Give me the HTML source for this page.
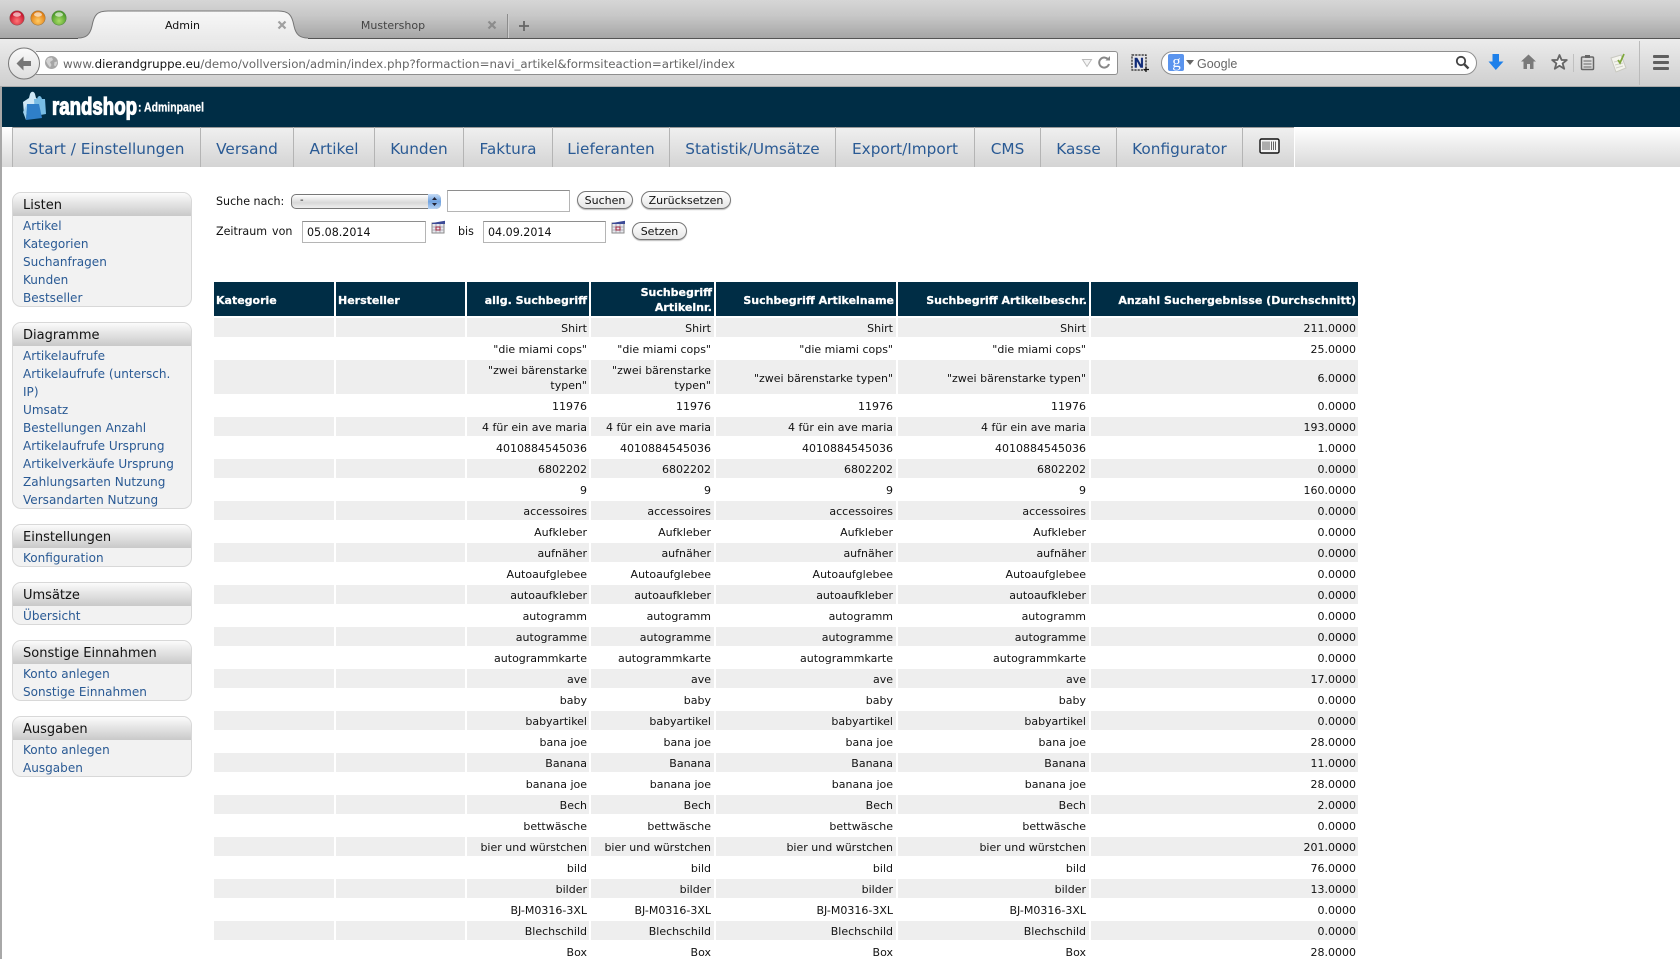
<!DOCTYPE html>
<html lang="de"><head><meta charset="utf-8"><title>Admin</title>
<style>
html,body{margin:0;padding:0;width:1680px;height:959px;overflow:hidden;background:#fff}
body{position:relative;font-family:"DejaVu Sans","Liberation Sans",sans-serif;color:#111}
.a{position:absolute;white-space:nowrap}
#title{left:0;top:0;width:1680px;height:38px;background:linear-gradient(#d6d6d6,#c8c8c8 40%,#a6a6a6);border-bottom:1px solid #555}
#tool{left:0;top:39px;width:1680px;height:47px;background:linear-gradient(#ececec,#cfcfcf);border-bottom:1px solid #aaa}
#edge{left:0;top:87px;width:2px;height:872px;background:#a8a8a8}
#dark{left:0;top:87px;width:1680px;height:40px;background:#002d45}
#nav{left:0;top:127px;width:1680px;height:40px;background:linear-gradient(#fff,#d9d9d9)}
.n{position:absolute;top:127px;height:40px;line-height:44px;font-size:15.3px;color:#2a5a94;text-align:center;border-right:1px solid #b4b4b4;background:linear-gradient(#f0f0f0,#d4d4d4);box-shadow:inset 0 1px 0 #999}
.box{position:absolute;left:12px;width:178px;border:1px solid #d8d8d8;border-radius:9px;background:#f2f2f2;overflow:hidden}
.box h4{margin:0;height:23px;line-height:25px;padding-left:10px;font-weight:normal;font-size:13px;color:#111;background:linear-gradient(#fbfbfb,#c9c9c9)}
.box a{display:block;position:relative;top:1px;margin-left:10px;font-size:12.05px;line-height:18px;color:#2a5a94}
.lb{font-size:11.1px;color:#111;line-height:16px}
.in{position:absolute;box-sizing:border-box;border:1px solid #b5b5b5;border-top-color:#8e8e8e;background:#fff;font-size:11.1px;line-height:22px;padding-left:4px;color:#111}
.bt{position:absolute;box-sizing:border-box;height:18px;border:1px solid #777;border-radius:9px;background:linear-gradient(#fff,#e6e6e6);font-size:11px;line-height:17px;text-align:center;color:#111;box-shadow:0 1px 1px #bbb}
table{position:absolute;left:212px;top:280px;border-collapse:separate;border-spacing:2px;table-layout:fixed;width:1148px}
th{background:#002d45;color:#fff;font-size:11px;font-weight:bold;text-align:right;padding:3px 2px 1px;height:30px;line-height:15px;-webkit-text-stroke:.25px #fff}
th.l{text-align:left}
td{font-size:11px;line-height:15px;height:15px;padding:3px 2px 1px 2px;text-align:right;color:#111}
td:nth-child(4),td:nth-child(5),td:nth-child(6){padding-right:3px}
tr.g td{background:#eee}
</style></head><body>

<div class="a" id="title"></div>
<div class="a" id="tool"></div>

<!-- traffic lights -->
<svg class="a" style="left:0;top:0" width="80" height="36">
<defs>
<radialGradient id="r" cx="50%" cy="70%" r="60%"><stop offset="0" stop-color="#f77"/><stop offset="1" stop-color="#c8102a"/></radialGradient>
<radialGradient id="y" cx="50%" cy="70%" r="60%"><stop offset="0" stop-color="#fc6"/><stop offset="1" stop-color="#e07b10"/></radialGradient>
<radialGradient id="v" cx="50%" cy="70%" r="60%"><stop offset="0" stop-color="#ad6"/><stop offset="1" stop-color="#4a9a28"/></radialGradient>
</defs>
<circle cx="17" cy="18" r="7.2" fill="url(#r)" stroke="#8a5a5a" stroke-width=".6"/>
<circle cx="38" cy="18" r="7.2" fill="url(#y)" stroke="#9a7a4a" stroke-width=".6"/>
<circle cx="59" cy="18" r="7.2" fill="url(#v)" stroke="#5a8a4a" stroke-width=".6"/>
<ellipse cx="17" cy="14.5" rx="4" ry="2.2" fill="#fff" opacity=".6"/>
<ellipse cx="38" cy="14.5" rx="4" ry="2.2" fill="#fff" opacity=".6"/>
<ellipse cx="59" cy="14.5" rx="4" ry="2.2" fill="#fff" opacity=".6"/>
</svg>

<!-- active tab -->
<svg class="a" style="left:72px;top:8px" width="244" height="32">
<defs><linearGradient id="tb" x1="0" y1="0" x2="0" y2="1"><stop offset="0" stop-color="#f8f8f8"/><stop offset="1" stop-color="#e9e9e9"/></linearGradient></defs>
<path d="M6 30C14 30 18 27 20 18C22 7 25 3 36 3H206C217 3 220 7 222 18C224 27 228 30 236 30V32H6Z" fill="url(#tb)"/>
<path d="M6 30C14 30 18 27 20 18C22 7 25 3 36 3H206C217 3 220 7 222 18C224 27 228 30 236 30" fill="none" stroke="#777" stroke-width="1"/>
</svg>
<div class="a" style="left:150px;top:18px;width:65px;text-align:center;font-size:11px;line-height:16px;color:#111">Admin</div>
<svg class="a" style="left:277px;top:20px" width="10" height="10"><path d="M1.5 1.5L8.5 8.5M8.5 1.5L1.5 8.5" stroke="#a0a0a0" stroke-width="2.2"/></svg>
<div class="a" style="left:350px;top:18px;width:86px;text-align:center;font-size:11px;line-height:16px;color:#444">Mustershop</div>
<svg class="a" style="left:487px;top:20px" width="10" height="10"><path d="M1.5 1.5L8.5 8.5M8.5 1.5L1.5 8.5" stroke="#8c8c8c" stroke-width="2.2"/></svg>
<div class="a" style="left:507px;top:14px;width:1px;height:24px;background:#8c8c8c;box-shadow:1px 0 0 #ccc"></div>
<svg class="a" style="left:518px;top:20px" width="12" height="12"><path d="M6 1V11M1 6H11" stroke="#666" stroke-width="1.8"/></svg>

<!-- url bar -->
<div class="a" style="left:36px;top:51px;width:1081px;height:22px;background:#fff;border:1px solid #8f8f8f;border-left:none;border-radius:0 3px 3px 0"></div>
<svg class="a" style="left:6px;top:46px" width="36" height="36">
<defs><linearGradient id="bk" x1="0" y1="0" x2="0" y2="1"><stop offset="0" stop-color="#fafafa"/><stop offset="1" stop-color="#dedede"/></linearGradient></defs>
<circle cx="18" cy="17.5" r="15.5" fill="url(#bk)" stroke="#777"/>
<path d="M10.5 17.5L17.5 10.5V15H25V20H17.5V24.5Z" fill="#777"/>
</svg>
<svg class="a" style="left:44px;top:55px" width="15" height="15"><circle cx="7.5" cy="7.5" r="6.5" fill="#a6a6a6"/><path d="M4 3L8 2.5L9 5L6 7L7.5 10L6 12.5L3.5 9L2 6ZM10.5 7L13.5 6.5L12 11L10 10.5Z" fill="#d2d2d2"/></svg>
<div class="a" style="left:63px;top:56px;width:680px;font-family:'DejaVu Sans',sans-serif;font-size:11.82px;line-height:17px;color:#666"><span style="color:#666">www.</span><span style="color:#111">dierandgruppe.eu</span>/demo/vollversion/admin/index.php?formaction=navi_artikel&amp;formsiteaction=artikel/index</div>
<svg class="a" style="left:1081px;top:58px" width="12" height="10"><path d="M1.5 1.5H10.5L6 8.5Z" fill="#f4f4f4" stroke="#bbb"/></svg>
<svg class="a" style="left:1097px;top:55px" width="15" height="15"><path d="M11.5 5A5 5 0 1 0 12 9" fill="none" stroke="#888" stroke-width="2"/><path d="M8.5 5.5H13V1Z" fill="#888"/></svg>

<!-- N icon -->
<svg class="a" style="left:1131px;top:54px" width="19" height="19">
<rect x="1" y="1" width="14" height="15" fill="#e4e4e8" stroke="#222" stroke-width="1.2" stroke-dasharray="2.2 1"/>
<text x="3" y="13.5" font-family="Liberation Sans" font-weight="bold" font-size="13.5" fill="#0f2a78" stroke="#0f2a78" stroke-width=".4">N</text>
<path d="M15 12.5V18M12.5 15.5H18" stroke="#111" stroke-width="1.3"/>
</svg>

<!-- search -->
<div class="a" style="left:1161px;top:51px;width:314px;height:22px;background:#fff;border:1px solid #8f8f8f;border-radius:12px"></div>
<div class="a" style="left:1168px;top:54px;width:16px;height:17px;background:#5a94ee;border-radius:2px"></div>
<div class="a" style="left:1170px;top:53px;width:13px;font-family:'Liberation Serif',serif;font-size:17px;line-height:17px;color:#fff;text-align:center">g</div>
<svg class="a" style="left:1186px;top:60px" width="8" height="6"><path d="M0 0H8L4 5Z" fill="#666"/></svg>
<div class="a" style="left:1197px;top:56px;font-family:'Liberation Sans',sans-serif;font-size:12.5px;line-height:17px;color:#666">Google</div>
<svg class="a" style="left:1455px;top:55px" width="15" height="15"><circle cx="6" cy="6" r="4.2" fill="none" stroke="#444" stroke-width="1.8"/><path d="M9 9L13.5 13.5" stroke="#444" stroke-width="2.4"/></svg>

<!-- right icons -->
<svg class="a" style="left:1487px;top:52px" width="18" height="20"><path d="M5.5 2H12V9.5H16.5L8.8 18L1.5 9.5H5.5Z" fill="#1d80ea"/></svg>
<svg class="a" style="left:1520px;top:53px" width="17" height="18"><path d="M8.5 1.5L16 8.5H13.5V16H10V11H7V16H3.5V8.5H1Z" fill="#7a7a7a"/></svg>
<svg class="a" style="left:1551px;top:53px" width="17" height="18"><path d="M8.5 2L10.6 7H15.8L11.6 10.4L13.2 15.8L8.5 12.8L3.8 15.8L5.4 10.4L1.2 7H6.4Z" fill="#efefef" stroke="#666" stroke-width="1.8" stroke-linejoin="round"/></svg>
<div class="a" style="left:1573px;top:54px;width:1px;height:18px;background:#c0c0c0"></div>
<svg class="a" style="left:1580px;top:54px" width="15" height="17"><rect x="1.5" y="3" width="12" height="12.5" rx="1" fill="#dcdcdc" stroke="#666" stroke-width="1.5"/><rect x="5" y="1" width="5" height="3" fill="#666"/><path d="M3.5 7H11.5M3.5 10H11.5M3.5 13H11.5" stroke="#666" stroke-width="1"/></svg>
<svg class="a" style="left:1608px;top:52px" width="22" height="21"><path d="M3 6L13 3L18 16L8 20Z" fill="#f4f4ee" stroke="#c8c8c0"/><path d="M6 10L14 8M7 13L15 11M8 16L15 14" stroke="#d0d0c8"/><path d="M10 8L12 11L16 2" fill="none" stroke="#7ea83a" stroke-width="1.7"/></svg>
<div class="a" style="left:1639px;top:41px;width:1px;height:44px;background:#bbb"></div>
<div class="a" style="left:1653px;top:55px;width:16px;height:3px;background:#5f5f5f;box-shadow:0 6px 0 #5f5f5f,0 12px 0 #5f5f5f;border-radius:1px"></div>

<div class="a" id="dark"></div>
<!-- logo -->
<svg class="a" style="left:20px;top:88px" width="200" height="36">
<path d="M3 14L9 10L10 6C11 3 14 3 15 6L16 10L19 12L17 28L4 26Z" fill="#cfe8f6"/>
<path d="M14 11H17C18 7 21 7 22 11H25L26 26L15 28Z" fill="#78bce4"/>
<path d="M7 16H19L22 30L6 32Z" fill="#2f7fc8"/>
<path d="M3 24L7 16L6 32Z" fill="#9ed0ee"/>
<text x="32" y="26.5" font-family="Liberation Sans" font-weight="bold" font-size="24" fill="#fff" stroke="#fff" stroke-width="1.2" textLength="85" lengthAdjust="spacingAndGlyphs">randshop</text>
<text x="118" y="23.5" font-family="Liberation Sans" font-weight="bold" font-size="13" fill="#fff" stroke="#fff" stroke-width=".25" textLength="66" lengthAdjust="spacingAndGlyphs">: Adminpanel</text>
</svg>

<div class="a" id="nav"></div>
<div class="a" style="left:12px;top:127px;width:1px;height:40px;background:#b4b4b4"></div>
<div class="n" style="left:13px;width:187px">Start / Einstellungen</div>
<div class="n" style="left:201px;width:92px">Versand</div>
<div class="n" style="left:294px;width:80px">Artikel</div>
<div class="n" style="left:375px;width:88px">Kunden</div>
<div class="n" style="left:464px;width:88px">Faktura</div>
<div class="n" style="left:553px;width:116px">Lieferanten</div>
<div class="n" style="left:670px;width:165px">Statistik/Umsätze</div>
<div class="n" style="left:836px;width:138px">Export/Import</div>
<div class="n" style="left:975px;width:65px">CMS</div>
<div class="n" style="left:1041px;width:75px">Kasse</div>
<div class="n" style="left:1117px;width:125px">Konfigurator</div>
<div class="n" style="left:1243px;width:51px;border-right:1px solid #fff"></div>
<svg class="a" style="left:1259px;top:138px" width="22" height="17"><rect x="1" y="1" width="19" height="14" rx="1.5" fill="#f4f4f4" stroke="#111" stroke-width="1.4"/><path d="M4 3.5V12M6 3.5V12M8 3.5V12M10 3.5V12M12.5 3.5V12M14.5 3.5V12M16.5 3.5V12" stroke="#555" stroke-width=".9"/></svg>

<div class="a" id="edge"></div>

<!-- sidebar -->
<div class="box" style="top:192px;height:113px"><h4>Listen</h4>
<a>Artikel</a><a>Kategorien</a><a>Suchanfragen</a><a>Kunden</a><a>Bestseller</a></div>
<div class="box" style="top:322px;height:185px"><h4>Diagramme</h4>
<a>Artikelaufrufe</a><a>Artikelaufrufe (untersch.</a><a>IP)</a><a>Umsatz</a><a>Bestellungen Anzahl</a><a>Artikelaufrufe Ursprung</a><a>Artikelverkäufe Ursprung</a><a>Zahlungsarten Nutzung</a><a>Versandarten Nutzung</a></div>
<div class="box" style="top:524px;height:41px"><h4>Einstellungen</h4><a>Konfiguration</a></div>
<div class="box" style="top:582px;height:41px"><h4>Umsätze</h4><a>Übersicht</a></div>
<div class="box" style="top:640px;height:59px"><h4>Sonstige Einnahmen</h4><a>Konto anlegen</a><a>Sonstige Einnahmen</a></div>
<div class="box" style="top:716px;height:59px"><h4>Ausgaben</h4><a>Konto anlegen</a><a>Ausgaben</a></div>

<!-- form -->
<div class="a lb" style="left:216px;top:194px">Suche nach:</div>
<div class="a" style="left:291px;top:194px;width:150px;height:15px;box-sizing:border-box;border:1px solid #777;border-radius:5px;background:linear-gradient(#fff,#d8d8d8 60%,#eee);font-size:10px;line-height:11px;padding-left:8px">-</div>
<div class="a" style="left:428px;top:194px;width:13px;height:15px;border-radius:0 5px 5px 0;background:linear-gradient(#c6dcf6,#6fa2e0 50%,#b6d2f2)"></div>
<svg class="a" style="left:431px;top:196px" width="7" height="11"><path d="M3.5 1L6 4H1ZM3.5 10L1 7H6Z" fill="#223"/></svg>
<div class="in" style="left:447px;top:190px;width:123px;height:22px"></div>
<div class="bt" style="left:577px;top:191px;width:56px">Suchen</div>
<div class="bt" style="left:641px;top:191px;width:90px">Zurücksetzen</div>
<div class="a lb" style="left:216px;top:224px">Zeitraum</div>
<div class="a lb" style="left:272px;top:224px">von</div>
<div class="in" style="left:302px;top:221px;width:124px;height:22px">05.08.2014</div>
<svg class="a" style="left:431px;top:220px" width="15" height="14"><rect x="1" y="3" width="12" height="10" fill="#e8e8ee" stroke="#8a8a8a"/><path d="M1 3L14 .8V4H1Z" fill="#3c4a96"/><path d="M5 4V13M9 4V13M1 7H13M1 10H13" stroke="#9a9aa4" stroke-width=".8"/><rect x="5" y="7" width="4" height="3" fill="none" stroke="#a0203a" stroke-width="1"/></svg>
<div class="a lb" style="left:458px;top:224px">bis</div>
<div class="in" style="left:483px;top:221px;width:123px;height:22px">04.09.2014</div>
<svg class="a" style="left:611px;top:220px" width="15" height="14"><rect x="1" y="3" width="12" height="10" fill="#e8e8ee" stroke="#8a8a8a"/><path d="M1 3L14 .8V4H1Z" fill="#3c4a96"/><path d="M5 4V13M9 4V13M1 7H13M1 10H13" stroke="#9a9aa4" stroke-width=".8"/><rect x="5" y="7" width="4" height="3" fill="none" stroke="#a0203a" stroke-width="1"/></svg>
<div class="bt" style="left:632px;top:222px;width:55px">Setzen</div>

<!-- table -->
<table>
<colgroup><col style="width:120px"><col style="width:129px"><col style="width:122px"><col style="width:123px"><col style="width:180px"><col style="width:191px"><col style="width:267px"></colgroup>
<thead><tr><th class="l">Kategorie</th><th class="l">Hersteller</th><th>allg. Suchbegriff</th><th>Suchbegriff Artikelnr.</th><th>Suchbegriff Artikelname</th><th>Suchbegriff Artikelbeschr.</th><th>Anzahl Suchergebnisse (Durchschnitt)</th></tr></thead>
<tbody>
<tr class="g"><td></td><td></td><td>Shirt</td><td>Shirt</td><td>Shirt</td><td>Shirt</td><td>211.0000</td></tr>
<tr><td></td><td></td><td>"die miami cops"</td><td>"die miami cops"</td><td>"die miami cops"</td><td>"die miami cops"</td><td>25.0000</td></tr>
<tr class="g"><td></td><td></td><td>"zwei bärenstarke typen"</td><td>"zwei bärenstarke typen"</td><td>"zwei bärenstarke typen"</td><td>"zwei bärenstarke typen"</td><td>6.0000</td></tr>
<tr><td></td><td></td><td>11976</td><td>11976</td><td>11976</td><td>11976</td><td>0.0000</td></tr>
<tr class="g"><td></td><td></td><td>4 für ein ave maria</td><td>4 für ein ave maria</td><td>4 für ein ave maria</td><td>4 für ein ave maria</td><td>193.0000</td></tr>
<tr><td></td><td></td><td>4010884545036</td><td>4010884545036</td><td>4010884545036</td><td>4010884545036</td><td>1.0000</td></tr>
<tr class="g"><td></td><td></td><td>6802202</td><td>6802202</td><td>6802202</td><td>6802202</td><td>0.0000</td></tr>
<tr><td></td><td></td><td>9</td><td>9</td><td>9</td><td>9</td><td>160.0000</td></tr>
<tr class="g"><td></td><td></td><td>accessoires</td><td>accessoires</td><td>accessoires</td><td>accessoires</td><td>0.0000</td></tr>
<tr><td></td><td></td><td>Aufkleber</td><td>Aufkleber</td><td>Aufkleber</td><td>Aufkleber</td><td>0.0000</td></tr>
<tr class="g"><td></td><td></td><td>aufnäher</td><td>aufnäher</td><td>aufnäher</td><td>aufnäher</td><td>0.0000</td></tr>
<tr><td></td><td></td><td>Autoaufglebee</td><td>Autoaufglebee</td><td>Autoaufglebee</td><td>Autoaufglebee</td><td>0.0000</td></tr>
<tr class="g"><td></td><td></td><td>autoaufkleber</td><td>autoaufkleber</td><td>autoaufkleber</td><td>autoaufkleber</td><td>0.0000</td></tr>
<tr><td></td><td></td><td>autogramm</td><td>autogramm</td><td>autogramm</td><td>autogramm</td><td>0.0000</td></tr>
<tr class="g"><td></td><td></td><td>autogramme</td><td>autogramme</td><td>autogramme</td><td>autogramme</td><td>0.0000</td></tr>
<tr><td></td><td></td><td>autogrammkarte</td><td>autogrammkarte</td><td>autogrammkarte</td><td>autogrammkarte</td><td>0.0000</td></tr>
<tr class="g"><td></td><td></td><td>ave</td><td>ave</td><td>ave</td><td>ave</td><td>17.0000</td></tr>
<tr><td></td><td></td><td>baby</td><td>baby</td><td>baby</td><td>baby</td><td>0.0000</td></tr>
<tr class="g"><td></td><td></td><td>babyartikel</td><td>babyartikel</td><td>babyartikel</td><td>babyartikel</td><td>0.0000</td></tr>
<tr><td></td><td></td><td>bana joe</td><td>bana joe</td><td>bana joe</td><td>bana joe</td><td>28.0000</td></tr>
<tr class="g"><td></td><td></td><td>Banana</td><td>Banana</td><td>Banana</td><td>Banana</td><td>11.0000</td></tr>
<tr><td></td><td></td><td>banana joe</td><td>banana joe</td><td>banana joe</td><td>banana joe</td><td>28.0000</td></tr>
<tr class="g"><td></td><td></td><td>Bech</td><td>Bech</td><td>Bech</td><td>Bech</td><td>2.0000</td></tr>
<tr><td></td><td></td><td>bettwäsche</td><td>bettwäsche</td><td>bettwäsche</td><td>bettwäsche</td><td>0.0000</td></tr>
<tr class="g"><td></td><td></td><td>bier und würstchen</td><td>bier und würstchen</td><td>bier und würstchen</td><td>bier und würstchen</td><td>201.0000</td></tr>
<tr><td></td><td></td><td>bild</td><td>bild</td><td>bild</td><td>bild</td><td>76.0000</td></tr>
<tr class="g"><td></td><td></td><td>bilder</td><td>bilder</td><td>bilder</td><td>bilder</td><td>13.0000</td></tr>
<tr><td></td><td></td><td>BJ-M0316-3XL</td><td>BJ-M0316-3XL</td><td>BJ-M0316-3XL</td><td>BJ-M0316-3XL</td><td>0.0000</td></tr>
<tr class="g"><td></td><td></td><td>Blechschild</td><td>Blechschild</td><td>Blechschild</td><td>Blechschild</td><td>0.0000</td></tr>
<tr><td></td><td></td><td>Box</td><td>Box</td><td>Box</td><td>Box</td><td>28.0000</td></tr>
</tbody></table>
</body></html>
